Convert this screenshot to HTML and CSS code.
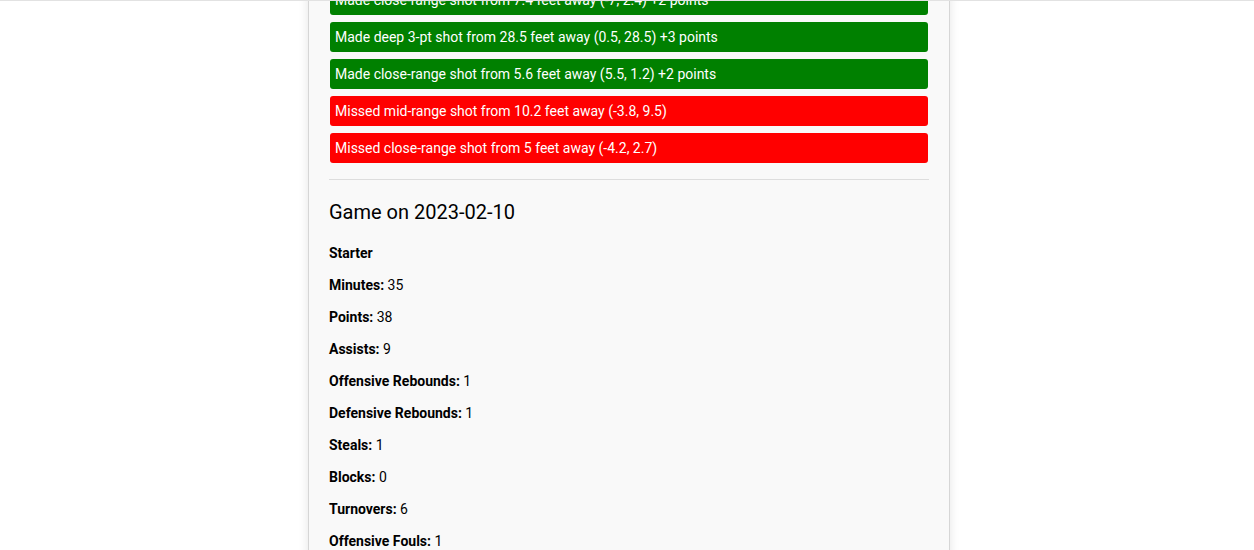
FILE: index.html
```html
<!DOCTYPE html>
<html lang="en">
<head>
<meta charset="utf-8">
<title>Player games</title>
<link rel="stylesheet" href="styles.css">
</head>
<body>
<main class="container">
  <ul class="shots">
    <li class="shot made">Made close-range shot from 7.4 feet away (-7, 2.4) +2 points</li>
    <li class="shot made">Made deep 3-pt shot from 28.5 feet away (0.5, 28.5) +3 points</li>
    <li class="shot made">Made close-range shot from 5.6 feet away (5.5, 1.2) +2 points</li>
    <li class="shot missed">Missed mid-range shot from 10.2 feet away (-3.8, 9.5)</li>
    <li class="shot missed">Missed close-range shot from 5 feet away (-4.2, 2.7)</li>
  </ul>
  <hr class="divider">
  <section class="game">
    <h2 class="game-title">Game on 2023-02-10</h2>
    <p class="stat"><strong>Starter</strong></p>
    <p class="stat"><strong>Minutes:</strong> 35</p>
    <p class="stat"><strong>Points:</strong> 38</p>
    <p class="stat"><strong>Assists:</strong> 9</p>
    <p class="stat"><strong>Offensive Rebounds:</strong> 1</p>
    <p class="stat"><strong>Defensive Rebounds:</strong> 1</p>
    <p class="stat"><strong>Steals:</strong> 1</p>
    <p class="stat"><strong>Blocks:</strong> 0</p>
    <p class="stat"><strong>Turnovers:</strong> 6</p>
    <p class="stat"><strong>Offensive Fouls:</strong> 1</p>
  </section>
</main>
</body>
</html>
```
FILE: styles.css
```css
html {
  height: 100%;
  overflow: hidden;
}
body {
  margin: 0;
  padding: 0 0 0 4px;
  border-top: 1px solid #e2e2e2;
  background: #ffffff;
  font-family: Roboto, "Liberation Sans", Arial, sans-serif;
  font-size: 14px;
  color: #000;
}
.container {
  width: 600px;
  min-height: 600px;
  margin: -30px auto 0;
  padding: 14px 20px 0;
  background: #f9f9f9;
  border-left: 1px solid #d6d6d6;
  border-right: 1px solid #d6d6d6;
  box-shadow: 0 0 10px rgba(0, 0, 0, 0.1);
}
.shots {
  list-style: none;
  margin: 0;
  padding: 0;
}
.shot {
  margin: 0 1px 7px;
  padding: 5px;
  line-height: 20px;
  color: #fff;
  border-radius: 3px;
}
.shot.made {
  background: #008000;
}
.shot.missed {
  background: #ff0000;
}
.divider {
  border: 0;
  border-top: 1px solid #dddddd;
  margin: 16px 0 0;
  height: 0;
}
.game-title {
  margin: 20px 0 20px;
  font-size: 20px;
  line-height: 24px;
  font-weight: 400;
}
.stat {
  margin: 0 0 14px;
  line-height: 18px;
}
.stat strong {
  font-weight: 700;
}
```
